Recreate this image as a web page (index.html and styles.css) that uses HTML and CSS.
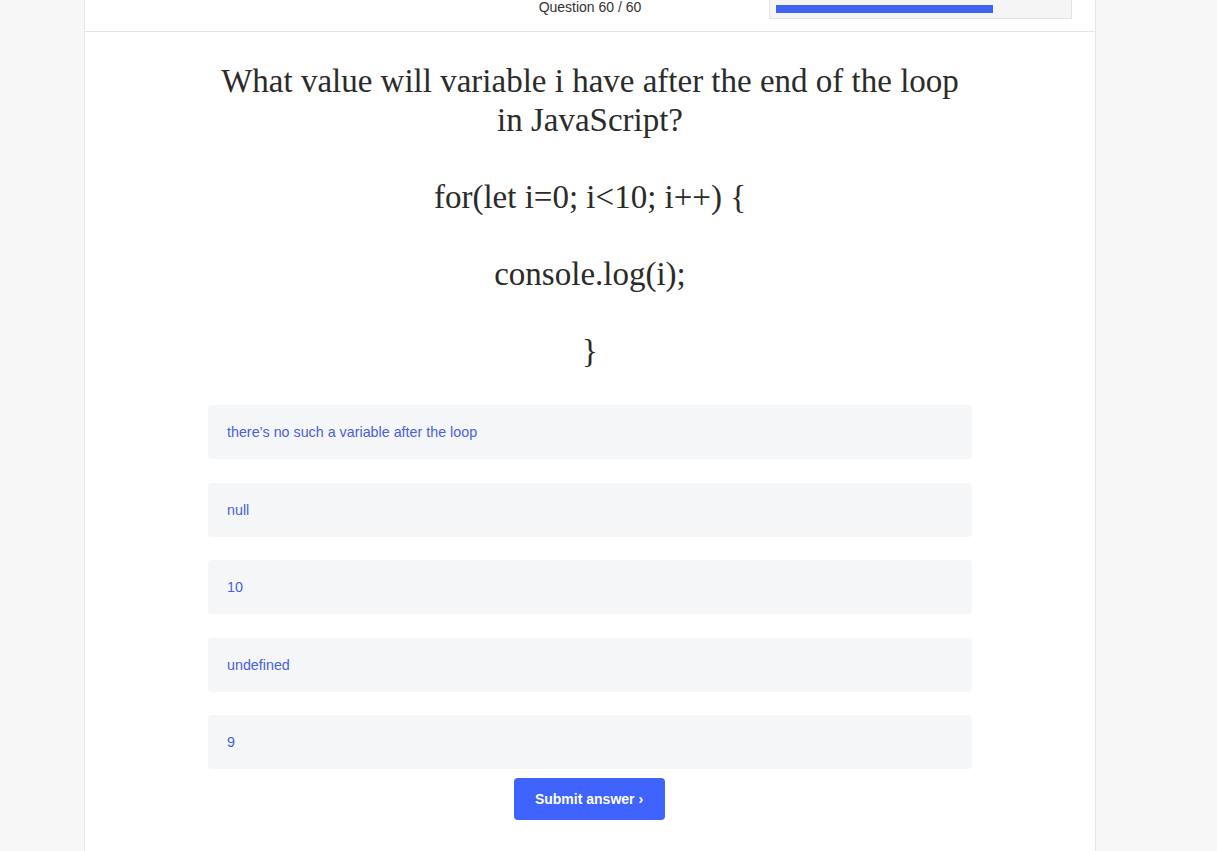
FILE: index.html
```html
<!DOCTYPE html>
<html lang="en">
<head>
<meta charset="utf-8">
<title>Quiz</title>
<link rel="stylesheet" href="styles.css">
</head>
<body>
<div class="panel">
  <header class="topbar">
    <div class="spacer"></div>
    <div class="counter">Question 60 / 60</div>
    <div class="progress"><div class="progress-fill" style="width: 217px"></div></div>
  </header>
  <main class="quiz">
    <div class="question">
      <p class="q-title">What value will variable i have after the end of the loop<br>in JavaScript?</p>
      <p class="q-code">for(let i=0; i&lt;10; i++) {</p>
      <p class="q-code">console.log(i);</p>
      <p class="q-code">}</p>
    </div>
    <ul class="options">
      <li class="option">there’s no such a variable after the loop</li>
      <li class="option">null</li>
      <li class="option">10</li>
      <li class="option">undefined</li>
      <li class="option">9</li>
    </ul>
    <button class="submit">Submit answer ›</button>
  </main>
</div>
</body>
</html>
```
FILE: styles.css
```css
html, body {
  margin: 0;
  padding: 0;
}
body {
  background: #f7f7f7;
  font-family: "Liberation Sans", Arial, sans-serif;
  color: #333;
  min-height: 851px;
}
.panel {
  box-sizing: border-box;
  width: 1012px;
  margin-left: 84px;
  min-height: 851px;
  background: #fff;
  border-left: 1px solid #e6e6e6;
  border-right: 1px solid #e6e6e6;
}
.topbar {
  display: grid;
  grid-template-columns: 1fr auto 1fr;
  align-items: start;
  height: 31px;
  border-bottom: 1px solid #e6e6e6;
}
.counter {
  font-size: 14px;
  line-height: 16px;
  color: #333;
  margin-top: -1px;
}
.progress {
  justify-self: end;
  margin-right: 23px;
  box-sizing: border-box;
  width: 303px;
  height: 20px;
  margin-top: -1px;
  background: #f5f5f5;
  border: 1px solid #e4e4e4;
  padding: 5px 6px;
}
.progress-fill {
  height: 8px;
  background: #4062f1;
}
.quiz {
  display: flex;
  flex-direction: column;
  align-items: center;
  padding-top: 30px;
}
.question {
  width: 764px;
  text-align: center;
  font-family: "Liberation Serif", "Times New Roman", serif;
  color: #2b2b2b;
  font-size: 33px;
  line-height: 39px;
}
.question p {
  margin: 0 0 38px;
}
.question p:last-child {
  margin-bottom: 34px;
}
.options {
  list-style: none;
  margin: 0;
  padding: 0;
  width: 764px;
  display: flex;
  flex-direction: column;
  gap: 23.5px;
}
.option {
  background: #f5f6f8;
  border-radius: 4px;
  height: 54px;
  display: flex;
  align-items: center;
  padding: 0 19px;
  font-size: 14.3px;
  color: #4a5fd8;
}
.submit {
  margin: 9px 2px 0 0;
  width: 151px;
  height: 42px;
  border: none;
  border-radius: 4px;
  background: #3e63ff;
  color: #fff;
  font-family: "Liberation Sans", Arial, sans-serif;
  font-weight: bold;
  font-size: 14px;
}
```
